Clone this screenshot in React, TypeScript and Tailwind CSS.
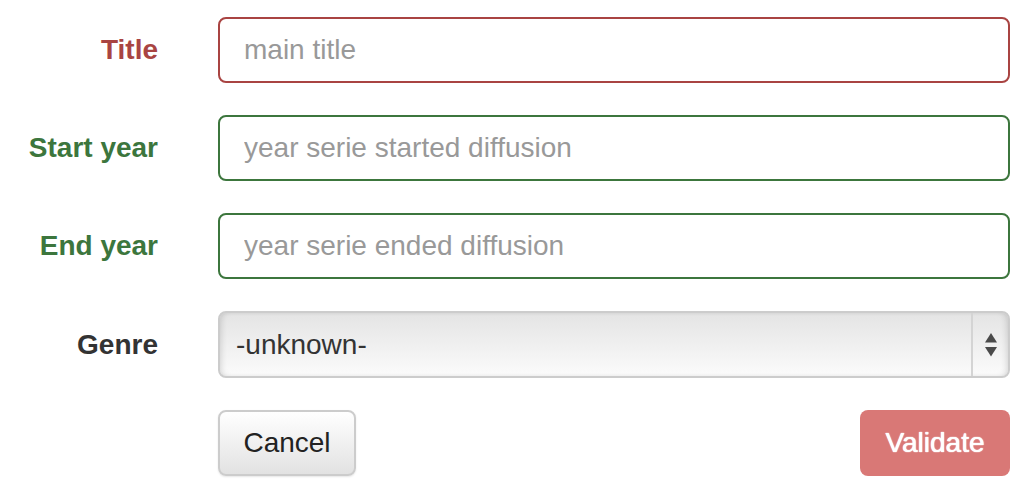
import React from 'react';

const SelectArrows = () => (
  <svg width="14" height="26" viewBox="0 0 14 26" className="text-[#4a4a4a]">
    <path d="M7 1 L13 10.5 L1 10.5 Z" fill="currentColor" />
    <path d="M1 15 L13 15 L7 24.5 Z" fill="currentColor" />
  </svg>
);

const App = () => {
  const fields = [
    { label: 'Title', placeholder: 'main title', tone: 'error' },
    { label: 'Start year', placeholder: 'year serie started diffusion', tone: 'ok' },
    { label: 'End year', placeholder: 'year serie ended diffusion', tone: 'ok' },
  ];

  return (
    <div className="w-[1024px] h-[488px] bg-white pt-[17px] pr-[14px] font-['Liberation_Sans',Arial,sans-serif] overflow-hidden">
      <div className="grid grid-cols-[158px_1fr] gap-x-[60px] gap-y-[32px] items-center">
        {fields.map((f) => (
          <React.Fragment key={f.label}>
            <label
              className={`text-right text-[28px] font-bold leading-none ${
                f.tone === 'error' ? 'text-[#a94442]' : 'text-[#3c763d]'
              }`}
            >
              {f.label}
            </label>
            <input
              type="text"
              placeholder={f.placeholder}
              className={`h-[66px] w-full rounded-[8px] border-2 bg-white px-[24px] text-[28px] text-[#555] placeholder:text-[#999] outline-none ${
                f.tone === 'error' ? 'border-[#a94442]' : 'border-[#3c763d]'
              }`}
            />
          </React.Fragment>
        ))}

        <label className="text-right text-[28px] font-bold leading-none text-[#333]">Genre</label>
        <div className="flex h-[67px] w-full rounded-[8px] border-2 border-[#cccccc] bg-gradient-to-b from-[#e4e4e4] to-[#fbfbfb] shadow-[inset_4px_0_6px_-3px_rgba(0,0,0,0.15),inset_-4px_0_6px_-3px_rgba(0,0,0,0.15)]">
          <div className="flex flex-1 items-center pl-[16px] text-[28px] text-[#333]">-unknown-</div>
          <div className="flex w-[37px] items-center justify-center border-l-2 border-[#d4d4d4]">
            <SelectArrows />
          </div>
        </div>

        <div />
        <div className="flex justify-between">
          <button className="h-[66px] w-[138px] rounded-[8px] border-2 border-[#cccccc] bg-gradient-to-b from-white to-[#e2e2e2] text-[28px] text-[#222] shadow-[0_1px_2px_rgba(0,0,0,0.1)]">
            Cancel
          </button>
          <button className="h-[66px] w-[150px] rounded-[8px] bg-[#d97876] text-[28px] text-white [text-shadow:0_0_1px_white,0_0_1px_white]">
            Validate
          </button>
        </div>
      </div>
    </div>
  );
};

export default App;
